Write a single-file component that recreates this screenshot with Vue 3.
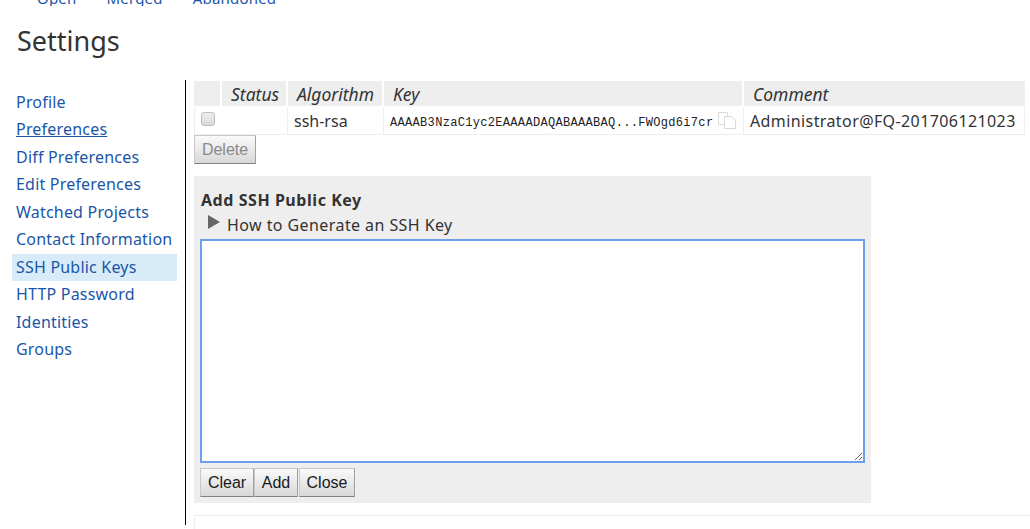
<template>
  <div class="page">
    <div class="tabs">
      <a v-for="tab in tabs" :key="tab">{{ tab }}</a>
    </div>
    <h1>Settings</h1>
    <div class="layout">
      <nav class="sidebar">
        <a
          v-for="item in menu"
          :key="item"
          :class="{ active: item === 'SSH Public Keys', hovered: item === 'Preferences' }"
        >{{ item }}</a>
      </nav>
      <main class="content">
        <table class="keys">
          <thead>
            <tr>
              <th class="c-check"></th>
              <th class="c-status">Status</th>
              <th class="c-alg">Algorithm</th>
              <th class="c-key">Key</th>
              <th class="c-comment">Comment</th>
            </tr>
          </thead>
          <tbody>
            <tr v-for="key in keys" :key="key.comment">
              <td class="check-cell"><span class="checkbox"></span></td>
              <td></td>
              <td class="alg-cell">{{ key.algorithm }}</td>
              <td class="key-cell">
                <span class="mono">{{ key.key }}</span>
                <svg class="copy" width="19" height="17" viewBox="0 0 19 17">
                  <path d="M0.5 0.5h9v4M0.5 0.5v12h6" fill="none" stroke="#dcdcdc" />
                  <path d="M6.5 4.5h7l4 4v8h-11z" fill="#fff" stroke="#d8d8d8" />
                </svg>
              </td>
              <td class="comment-cell">{{ key.comment }}</td>
            </tr>
          </tbody>
        </table>
        <button class="btn disabled delete" disabled>Delete</button>
        <section class="add-panel">
          <div class="add-title">Add SSH Public Key</div>
          <div class="howto">
            <span class="triangle"></span>
            <span class="howto-text">How to Generate an SSH Key</span>
          </div>
          <textarea class="key-input"></textarea>
          <div class="actions">
            <button class="btn clear">Clear</button>
            <button class="btn add">Add</button>
            <button class="btn close">Close</button>
          </div>
        </section>
        <div class="next-section"></div>
      </main>
    </div>
  </div>
</template>

<script setup>
const tabs = ['Open', 'Merged', 'Abandoned']

const menu = [
  'Profile',
  'Preferences',
  'Diff Preferences',
  'Edit Preferences',
  'Watched Projects',
  'Contact Information',
  'SSH Public Keys',
  'HTTP Password',
  'Identities',
  'Groups'
]

const keys = [
  {
    algorithm: 'ssh-rsa',
    key: 'AAAAB3NzaC1yc2EAAAADAQABAAABAQ...FWOgd6i7cr',
    comment: 'Administrator@FQ-201706121023'
  }
]
</script>

<style>
html, body {
  margin: 0;
  background: #fff;
  overflow: hidden;
}
</style>

<style scoped>
.page {
  height: 529px;
  overflow: hidden;
  font-family: "Noto Sans", "Open Sans", sans-serif;
  font-size: 16px;
  color: #333;
}

.tabs {
  display: flex;
  gap: 30px;
  height: 6px;
  padding-left: 37px;
  overflow: hidden;
  line-height: 0;
  font-size: 15px;
  letter-spacing: 0.2px;
  color: #1a56a8;
}

.tabs a {
  display: block;
  margin-top: -2px;
  white-space: nowrap;
}

h1 {
  margin: 0;
  height: 74px;
  padding: 16px 0 0 17px;
  box-sizing: border-box;
  font-size: 27px;
  line-height: 37px;
  font-weight: 400;
  color: #333;
}

.layout {
  display: flex;
  height: 445px;
}

.sidebar {
  width: 186px;
  flex: none;
  box-sizing: border-box;
  border-right: 1px solid #000;
  padding: 9px 8px 0 12px;
}

.sidebar a {
  display: block;
  height: 27.45px;
  line-height: 27.45px;
  padding-left: 4px;
  font-size: 16px;
  letter-spacing: 0.2px;
  color: #1a56a8;
  white-space: nowrap;
}

.sidebar a.hovered {
  text-decoration: underline;
}

.sidebar a.active {
  background: #d8ebf9;
}

.content {
  flex: 1;
  min-width: 0;
  padding: 1px 0 0 8px;
}

.keys {
  border-collapse: separate;
  border-spacing: 0;
  table-layout: fixed;
  width: 831px;
}

.keys th {
  height: 26px;
  padding: 0 0 0 9px;
  box-sizing: border-box;
  background: #eee;
  border-right: 2px solid #fff;
  border-bottom: 1px solid #fff;
  text-align: left;
  font-weight: 400;
  font-style: italic;
  font-size: 17.5px;
  color: #333;
}

.c-check { width: 28px; }
.c-status { width: 66px; }
.c-alg { width: 96px; }
.c-key { width: 360px; }
.c-comment { width: 281px; }

.keys th:last-child {
  border-right: 0;
}

.keys td {
  height: 28px;
  padding: 0 0 0 6px;
  box-sizing: border-box;
  border-right: 1px solid #eee;
  border-bottom: 1px solid #eee;
  font-size: 16px;
  white-space: nowrap;
}

.keys td:first-child {
  border-left: 1px solid #eee;
  border-right: 0;
}

.check-cell {
  vertical-align: top;
}

.checkbox {
  display: block;
  width: 12px;
  height: 12px;
  margin-top: 5px;
  border: 1px solid #bdbdbd;
  border-radius: 3px;
  background: linear-gradient(#eee, #d8d8d8);
}

.key-cell {
  position: relative;
}

.mono {
  position: relative;
  top: -1px;
  font-family: "Liberation Mono", monospace;
  font-size: 12px;
  letter-spacing: 0.32px;
  color: #222;
}

.copy {
  position: absolute;
  right: 6px;
  top: 5px;
}

.comment-cell {
  overflow: hidden;
  letter-spacing: 0.4px;
}

.btn {
  display: block;
  height: 29px;
  padding: 0;
  box-sizing: border-box;
  border: 1px solid #c8c8c8;
  border-bottom-color: #808080;
  border-right-color: #a0a0a0;
  background: linear-gradient(#fafafa, #d8d8d8);
  font-family: "Liberation Sans", Arial, sans-serif;
  font-size: 16px;
  color: #1a1a1a;
}

.btn.disabled {
  color: #8a8a8a;
}

.delete {
  width: 62px;
}

.add-panel {
  width: 677px;
  height: 327px;
  margin-top: 12px;
  padding: 13px 6px 0;
  box-sizing: border-box;
  background: #eee;
}

.add-title {
  padding-left: 1px;
  font-weight: 700;
  font-size: 16px;
  line-height: 22px;
  letter-spacing: 0.55px;
  color: #333;
}

.howto {
  display: flex;
  align-items: center;
  height: 26px;
  padding-left: 8px;
  color: #333;
}

.howto-text {
  position: relative;
  top: 1px;
  letter-spacing: 0.42px;
}

.triangle {
  width: 0;
  height: 0;
  margin: -4px 7px 0 0;
  border-style: solid;
  border-width: 7px 0 7px 12px;
  border-color: transparent transparent transparent #666;
}

.key-input {
  display: block;
  width: 665px;
  height: 224px;
  margin: 2px 0 0;
  padding: 2px;
  box-sizing: border-box;
  border: 2px solid #6f9fe8;
  background: #fff;
  outline: 0;
  font-size: 14px;
}

.actions {
  display: flex;
  margin-top: 5px;
}

.clear { width: 54px; }
.add { width: 44px; }
.close { width: 56px; margin-left: 1px; }

.next-section {
  height: 20px;
  margin-top: 12px;
  border-top: 1px solid #eee;
  border-left: 1px solid #eee;
}
</style>
